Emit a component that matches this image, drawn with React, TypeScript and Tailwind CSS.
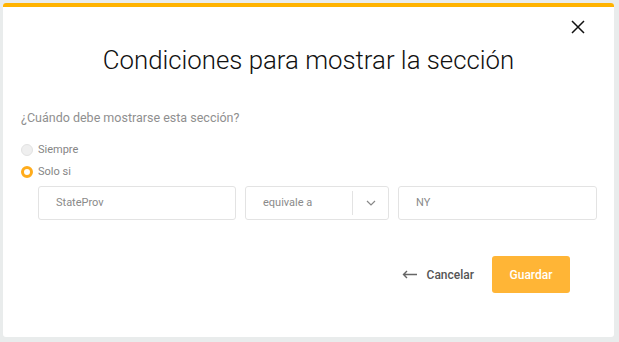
import React from 'react';

const Radio: React.FC<{ checked?: boolean; label: string }> = ({ checked, label }) => (
  <label className="flex h-[22px] items-center gap-[5px]">
    {checked ? (
      <span className="box-border h-[12px] w-[12px] rounded-full border-[3px] border-[#ffac1c] bg-white" />
    ) : (
      <span className="box-border h-[12px] w-[12px] rounded-full border border-[#e2e2e2] bg-[#efefef]" />
    )}
    <span className="text-[11px] text-[#858585]">{label}</span>
  </label>
);

export default function App() {
  return (
    <div
      className="h-[342px] w-[619px] bg-[#e9ecec] pl-[3px] pt-[3px]"
      style={{ fontFamily: 'Roboto, "Liberation Sans", sans-serif' }}
    >
      <div className="relative flex h-[334px] w-[611px] flex-col overflow-hidden rounded-[3px] bg-white">
        <div className="h-[4px] bg-[#ffb300]" />

        {/* close */}
        <button className="absolute right-[29px] top-[17px] text-[#111]">
          <svg width="14" height="14" viewBox="0 0 14 14" fill="none" stroke="currentColor" strokeWidth="1.5">
            <path d="M1 1L13 13M13 1L1 13" />
          </svg>
        </button>

        <h1 className="mt-[37px] text-center text-[25.8px] font-light leading-[32px] text-[#111]">
          Condiciones para mostrar la sección
        </h1>

        <p className="mt-[32px] pl-[18px] text-[12.5px] leading-[20px] text-[#8f8f8f]">
          ¿Cuándo debe mostrarse esta sección?
        </p>

        <div className="mt-[11px] flex flex-col pl-[18px]">
          <Radio label="Siempre" />
          <Radio checked label="Solo si" />
        </div>

        <div className="mt-[3px] flex gap-[9px] pl-[35px] pr-[17px]">
          <div className="flex h-[34px] w-[198px] items-center rounded-[3px] border border-[#e3e3e3] px-[17px] text-[11px] text-[#8a8a8a]">
            StateProv
          </div>
          <div className="flex h-[34px] w-[144px] items-center rounded-[3px] border border-[#e3e3e3] text-[11px] text-[#8a8a8a]">
            <span className="flex-1 pl-[17px]">equivale a</span>
            <span className="h-[24px] w-px bg-[#e3e3e3]" />
            <span className="flex w-[35px] items-center justify-center text-[#888]">
              <svg width="10" height="6" viewBox="0 0 10 6" fill="none" stroke="currentColor" strokeWidth="1.2">
                <path d="M1 1L5 5L9 1" />
              </svg>
            </span>
          </div>
          <div className="flex h-[34px] w-[199px] items-center rounded-[3px] border border-[#e3e3e3] px-[17px] text-[11px] text-[#8a8a8a]">
            NY
          </div>
        </div>

        <div className="mt-[36px] flex items-center justify-end gap-[18px] pr-[44px]">
          <button className="flex items-center gap-[10px] text-[12px] font-medium text-[#555]">
            <svg width="15" height="9" viewBox="0 0 15 9" fill="none" stroke="#666" strokeWidth="1.4">
              <path d="M15 4.5H1.5M5 1L1.5 4.5L5 8" />
            </svg>
            Cancelar
          </button>
          <button className="h-[37px] w-[78px] rounded-[3px] bg-[#ffb536] text-[12px] font-medium text-white">
            Guardar
          </button>
        </div>
      </div>
    </div>
  );
}
